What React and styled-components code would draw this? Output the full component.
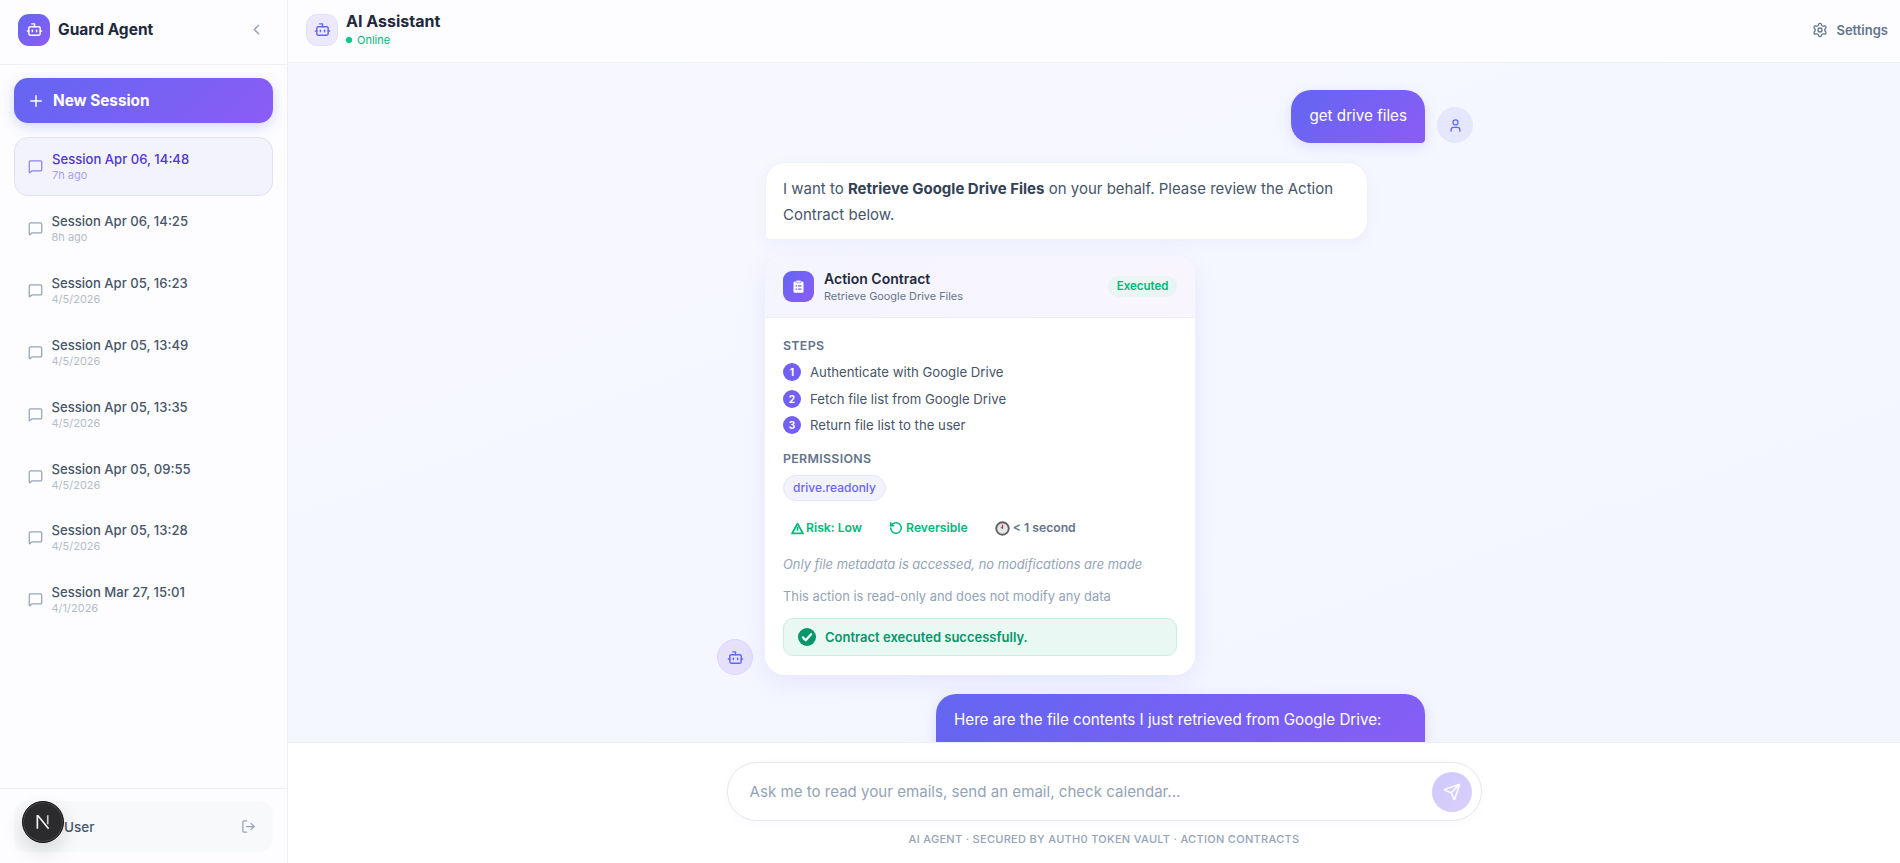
import React from 'react'
import styled, { createGlobalStyle } from 'styled-components'
import { Bot, ChevronLeft, LogOut, MessageSquare, Plus, RotateCcw, Send, Settings, User } from 'lucide-react'

const GlobalStyle = createGlobalStyle`
  html, body, #root { margin: 0; padding: 0; height: 100%; }
  body { font-family: Inter, "Noto Sans", sans-serif; color: #1e293b; overflow: hidden; }
  * { box-sizing: border-box; }
`

const gradient = 'linear-gradient(135deg, #6366f1, #8b5cf6)'

const Shell = styled.div`
  display: flex;
  width: 100vw;
  height: 100vh;
  overflow: hidden;
  background: #fff;
`

const Sidebar = styled.aside`
  width: 288px;
  flex: none;
  display: flex;
  flex-direction: column;
  background: #fdfdff;
  border-right: 1px solid #eceef5;
`

const SideHeader = styled.div`
  height: 65px;
  flex: none;
  display: flex;
  align-items: center;
  gap: 8px;
  padding: 0 22px 5px 18px;
  border-bottom: 1px solid #eff0f6;
`

const LogoBox = styled.div`
  width: 32px;
  height: 32px;
  border-radius: 11px;
  background: ${gradient};
  color: #fff;
  display: flex;
  align-items: center;
  justify-content: center;
`

const Brand = styled.div`
  flex: 1;
  font-size: 15.5px;
  font-weight: 700;
  color: #1e293b;
`

const Collapse = styled.div`
  color: #94a3b8;
  display: flex;
`

const SideBody = styled.div`
  flex: 1;
  padding: 13px 14px;
`

const NewSession = styled.button`
  width: 100%;
  height: 45px;
  display: flex;
  align-items: center;
  gap: 8px;
  padding: 0 13px;
  border: 0;
  border-radius: 14px;
  background: ${gradient};
  color: #fff;
  font: 700 15.3px Inter, sans-serif;
  box-shadow: 0 4px 14px rgba(99, 102, 241, 0.25);
`

const SessionList = styled.div`
  display: flex;
  flex-direction: column;
  gap: 4px;
  margin-top: 14px;
`

const SessionItem = styled.div`
  height: ${p => (p.$active ? '59px' : '57.8px')};
  display: flex;
  align-items: center;
  gap: 9px;
  padding: 0 ${p => (p.$active ? '13px' : '12.5px')};
  border-radius: 14px;
  border: 1px solid ${p => (p.$active ? '#e2e1f9' : 'transparent')};
  background: ${p => (p.$active ? '#f3f3fe' : 'transparent')};
  color: ${p => (p.$active ? '#8b83ea' : '#94a3b8')};
`

const SessionName = styled.div`
  font-size: 13.1px;
  line-height: 18px;
  font-weight: 500;
  color: ${p => (p.$active ? '#4f35d2' : '#475569')};
`

const SessionTime = styled.div`
  font-size: 11px;
  line-height: 15px;
  color: ${p => (p.$active ? '#a99ff0' : '#b4bcc9')};
`

const SideFooter = styled.div`
  flex: none;
  height: 75px;
  padding: 12px 14px;
  border-top: 1px solid #eff0f6;
`

const UserRow = styled.div`
  height: 51px;
  display: flex;
  align-items: center;
  padding: 0 17px 0 50px;
  border-radius: 14px;
  background: #f8f9fb;
  font-size: 13.5px;
  font-weight: 500;
  color: #475569;
`

const UserName = styled.div`
  flex: 1;
`

const LogoutIcon = styled.div`
  display: flex;
  color: #94a3b8;
`

const DevBadge = styled.div`
  position: absolute;
  left: 22px;
  top: 801px;
  width: 42px;
  height: 42px;
  border-radius: 50%;
  background: #2b2b2e;
  border: 1px solid #111;
  box-shadow: 0 0 0 1px #4a4a4f inset, 0 8px 20px rgba(0, 0, 0, 0.14);
  display: flex;
  align-items: center;
  justify-content: center;
`

const Main = styled.main`
  flex: 1;
  min-width: 0;
  display: flex;
  flex-direction: column;
`

const TopBar = styled.header`
  height: 63px;
  flex: none;
  display: flex;
  align-items: center;
  gap: 8px;
  padding: 0 12px 3px 18px;
  background: #fdfdff;
  border-bottom: 1px solid #eef0f7;
`

const TopIcon = styled.div`
  width: 32px;
  height: 32px;
  border-radius: 11px;
  background: #ece9fd;
  border: 1px solid #e2e0f9;
  color: #6366f1;
  display: flex;
  align-items: center;
  justify-content: center;
`

const TopText = styled.div`
  flex: 1;
`

const TopTitle = styled.div`
  font-size: 16px;
  line-height: 18px;
  font-weight: 700;
  color: #1e293b;
`

const Status = styled.div`
  display: flex;
  align-items: center;
  gap: 5px;
  font-size: 11px;
  line-height: 15px;
  margin-top: 3px;
  color: #00b87a;
`

const Dot = styled.span`
  width: 6px;
  height: 6px;
  border-radius: 50%;
  background: #00c983;
`

const SettingsLink = styled.div`
  display: flex;
  align-items: center;
  gap: 8px;
  font-size: 13px;
  font-weight: 600;
  color: #64748b;
`

const Feed = styled.div`
  flex: 1;
  min-height: 0;
  overflow: hidden;
  background: linear-gradient(160deg, #f7f8ff, #f3f5ff);
  padding: 27px 0 0 2px;
`

const Column = styled.div`
  width: 756px;
  margin: 0 auto;
  display: flex;
  flex-direction: column;
  gap: 19px;
`

const UserMsg = styled.div`
  display: flex;
  justify-content: flex-end;
  align-items: flex-end;
  gap: 12px;
  padding-right: ${p => (p.$indent ? '48px' : '0')};
`

const BotMsg = styled.div`
  display: flex;
  align-items: flex-end;
  gap: 12px;
`

const Avatar = styled.div`
  width: 36px;
  height: 36px;
  flex: none;
  border-radius: 50%;
  display: flex;
  align-items: center;
  justify-content: center;
  color: #6366f1;
  background: ${p => (p.$bot ? '#e5e0fc' : '#e4e7fd')};
  border: 1px solid ${p => (p.$bot ? '#dcd8fa' : '#e4e7fd')};
`

const UserBubble = styled.div`
  padding: 17px 18px 18px;
  width: ${p => p.$width || 'auto'};
  min-height: ${p => p.$minHeight || '0'};
  background: ${gradient};
  color: #fff;
  font-size: 15.2px;
  line-height: 18px;
  border-radius: 20px 20px 4px 20px;
  box-shadow: 0 4px 14px rgba(99, 102, 241, 0.16);
`

const BotStack = styled.div`
  display: flex;
  flex-direction: column;
  align-items: flex-start;
  gap: 16px;
`

const BotBubble = styled.div`
  width: 603px;
  padding: 13px 17px 11px;
  background: #fff;
  border: 1px solid #f0f1f8;
  border-radius: 20px 20px 20px 4px;
  font-size: 15px;
  line-height: 26px;
  color: #475569;
  box-shadow: 0 4px 14px rgba(99, 102, 241, 0.06);

  strong { font-weight: 700; color: #334155; }
`

const Card = styled.div`
  width: 430px;
  background: #fff;
  border-radius: 20px;
  overflow: hidden;
  box-shadow: 0 8px 26px rgba(99, 102, 241, 0.1);
`

const CardHead = styled.div`
  height: 62px;
  display: flex;
  align-items: center;
  gap: 10px;
  padding: 0 18px;
  background: linear-gradient(135deg, #f5f5ff, #f8f5fe);
  border-bottom: 1px solid #ecedf8;
`

const CardIcon = styled.div`
  width: 31px;
  height: 31px;
  border-radius: 9px;
  background: ${gradient};
  display: flex;
  align-items: center;
  justify-content: center;
`

const CardTitles = styled.div`
  flex: 1;
`

const CardTitle = styled.div`
  font-size: 14px;
  line-height: 17px;
  font-weight: 600;
  color: #1e293b;
`

const CardSub = styled.div`
  font-size: 10.9px;
  line-height: 14px;
  margin-top: 2px;
  color: #64748b;
`

const Pill = styled.div`
  height: 21px;
  padding: 0 8.5px;
  border-radius: 11px;
  background: #e8f5f2;
  color: #00b87a;
  font-size: 11.5px;
  font-weight: 600;
  line-height: 21px;
`

const CardBody = styled.div`
  padding: 20px 18px 19px;
`

const SectionLabel = styled.div`
  font-size: 12.4px;
  line-height: 15px;
  font-weight: 600;
  letter-spacing: 0.3px;
  color: #64748b;
  margin-top: ${p => p.$top || '0'};
`

const Steps = styled.div`
  display: flex;
  flex-direction: column;
  gap: 8.5px;
  margin-top: 10px;
`

const Step = styled.div`
  display: flex;
  align-items: center;
  gap: 9px;
  font-size: 13.2px;
  line-height: 18px;
  color: #475569;
`

const StepNum = styled.span`
  width: 18px;
  height: 18px;
  border-radius: 50%;
  background: #7360f3;
  color: #fff;
  font-size: 10px;
  font-weight: 700;
  display: flex;
  align-items: center;
  justify-content: center;
`

const Scope = styled.span`
  display: inline-block;
  margin-top: 9px;
  height: 26px;
  padding: 0 9px;
  border: 1px solid #e6e4fb;
  border-radius: 13px;
  background: #f3f3fe;
  color: #6b63f0;
  font-size: 12px;
  font-weight: 500;
  line-height: 24px;
`

const Meta = styled.div`
  display: flex;
  gap: 27px;
  padding-left: 8px;
  margin-top: 19px;
`

const MetaItem = styled.div`
  display: flex;
  align-items: center;
  gap: ${p => p.$gap || '2px'};
  font-size: 12.2px;
  line-height: 16px;
  font-weight: 600;
  color: ${p => p.$color};
`

const Note = styled.div`
  font-size: 12.9px;
  line-height: 16px;
  font-style: ${p => (p.$italic ? 'italic' : 'normal')};
  color: #94a3b8;
  margin-top: ${p => p.$top};
`

const Success = styled.div`
  height: 38px;
  margin-top: 13px;
  display: flex;
  align-items: center;
  gap: 9px;
  padding: 0 14px;
  border: 1px solid #c6efe1;
  border-radius: 10px;
  background: #e9f8f3;
  color: #059669;
  font-size: 13px;
  font-weight: 600;
`

const Composer = styled.div`
  flex: none;
  height: 121px;
  background: #fff;
  border-top: 1px solid #eceef5;
  padding: 19px 0 0 20px;
  display: flex;
  flex-direction: column;
  align-items: center;
`

const InputWrap = styled.div`
  width: 755px;
  height: 59px;
  display: flex;
  align-items: center;
  padding: 0 9px 0 22px;
  border: 1px solid #e5e7ee;
  border-radius: 30px;
  background: #fff;
  box-shadow: 0 2px 8px rgba(99, 102, 241, 0.04);
`

const Input = styled.input`
  flex: 1;
  border: 0;
  outline: 0;
  padding: 0;
  background: transparent;
  font: 400 15.1px Inter, sans-serif;
  color: #475569;

  &::placeholder { color: #94a3b8; opacity: 1; }
`

const SendBtn = styled.button`
  width: 40px;
  height: 40px;
  border: 0;
  border-radius: 50%;
  padding: 0;
  background: linear-gradient(135deg, #ccc9fb, #dccffb);
  color: #fff;
  display: flex;
  align-items: center;
  justify-content: center;
`

const Disclaimer = styled.div`
  margin-top: 11px;
  font-size: 11px;
  line-height: 14px;
  font-weight: 500;
  letter-spacing: 0.3px;
  color: #94a3b8;
`

const ClipboardFilled = () =>
  <svg width='15' height='15' viewBox='0 0 24 24' fill='none'>
    <rect x='4' y='4' width='16' height='18' rx='2' fill='#fff' />
    <rect x='8' y='2' width='8' height='4' rx='1' fill='#fff' stroke='#7360f3' strokeWidth='1' />
    <path d='M8 11h1M8 16h1M12 11h4M12 16h4' stroke='#7360f3' strokeWidth='2' strokeLinecap='round' />
  </svg>

const WarnIcon = () =>
  <svg width='13' height='13' viewBox='0 0 24 24' fill='none' stroke='#00b87a' strokeWidth='3.4'>
    <path d='M12 3 22 21H2Z' strokeLinejoin='round' />
    <path d='M12 9v7' strokeWidth='3' />
  </svg>

const TimerIcon = () =>
  <svg width='15' height='15' viewBox='0 0 24 24'>
    <circle cx='12' cy='12' r='10' fill='#e8e6e3' stroke='#5f5f62' strokeWidth='3' />
    <path d='M12 12V6' stroke='#c2185b' strokeWidth='2' />
    <path d='M12 12l-3-2' stroke='#555' strokeWidth='1.5' />
  </svg>

const CheckFilled = () =>
  <svg width='18' height='18' viewBox='0 0 24 24'>
    <circle cx='12' cy='12' r='12' fill='#059669' />
    <path d='M6.5 12.5l3.8 3.8 7.2-8' fill='none' stroke='#fff' strokeWidth='3' strokeLinecap='round' strokeLinejoin='round' />
  </svg>

const NextLogo = () =>
  <svg width='18' height='18' viewBox='0 0 16 16' fill='none'>
    <path d='M3 14V2.5h.6L13 14' stroke='#f4f4f5' strokeWidth='1.5' />
    <path d='M12.2 2v8' stroke='#c9c9cc' strokeWidth='1.5' />
  </svg>

const sessions = [
  { name: 'Session Apr 06, 14:48', time: '7h ago', active: true },
  { name: 'Session Apr 06, 14:25', time: '8h ago' },
  { name: 'Session Apr 05, 16:23', time: '4/5/2026' },
  { name: 'Session Apr 05, 13:49', time: '4/5/2026' },
  { name: 'Session Apr 05, 13:35', time: '4/5/2026' },
  { name: 'Session Apr 05, 09:55', time: '4/5/2026' },
  { name: 'Session Apr 05, 13:28', time: '4/5/2026' },
  { name: 'Session Mar 27, 15:01', time: '4/1/2026' }
]

const steps = [
  'Authenticate with Google Drive',
  'Fetch file list from Google Drive',
  'Return file list to the user'
]

const App = () =>
  <Shell>
    <GlobalStyle />
    <Sidebar>
      <SideHeader>
        <LogoBox><Bot size={17} strokeWidth={2} /></LogoBox>
        <Brand>Guard Agent</Brand>
        <Collapse><ChevronLeft size={17} /></Collapse>
      </SideHeader>
      <SideBody>
        <NewSession><Plus size={18} strokeWidth={2} />New Session</NewSession>
        <SessionList>
          {sessions.map(s =>
            <SessionItem key={s.name} $active={s.active}>
              <MessageSquare size={15} strokeWidth={2} />
              <div>
                <SessionName $active={s.active}>{s.name}</SessionName>
                <SessionTime $active={s.active}>{s.time}</SessionTime>
              </div>
            </SessionItem>
          )}
        </SessionList>
      </SideBody>
      <SideFooter>
        <UserRow>
          <UserName>User</UserName>
          <LogoutIcon><LogOut size={15} /></LogoutIcon>
        </UserRow>
      </SideFooter>
    </Sidebar>
    <Main>
      <TopBar>
        <TopIcon><Bot size={17} /></TopIcon>
        <TopText>
          <TopTitle>AI Assistant</TopTitle>
          <Status><Dot />Online</Status>
        </TopText>
        <SettingsLink><Settings size={16} />Settings</SettingsLink>
      </TopBar>
      <Feed>
        <Column>
          <UserMsg>
            <UserBubble>get drive files</UserBubble>
            <Avatar><User size={15} /></Avatar>
          </UserMsg>
          <BotMsg>
            <Avatar $bot><Bot size={17} /></Avatar>
            <BotStack>
              <BotBubble>
                I want to <strong>Retrieve Google Drive Files</strong> on your behalf. Please review the Action Contract below.
              </BotBubble>
              <Card>
                <CardHead>
                  <CardIcon><ClipboardFilled /></CardIcon>
                  <CardTitles>
                    <CardTitle>Action Contract</CardTitle>
                    <CardSub>Retrieve Google Drive Files</CardSub>
                  </CardTitles>
                  <Pill>Executed</Pill>
                </CardHead>
                <CardBody>
                  <SectionLabel>STEPS</SectionLabel>
                  <Steps>
                    {steps.map((s, i) =>
                      <Step key={s}><StepNum>{i + 1}</StepNum>{s}</Step>
                    )}
                  </Steps>
                  <SectionLabel $top='17px'>PERMISSIONS</SectionLabel>
                  <Scope>drive.readonly</Scope>
                  <Meta>
                    <MetaItem $color='#00b87a'><WarnIcon />Risk: Low</MetaItem>
                    <MetaItem $color='#00b87a' $gap='3px'><RotateCcw size={14} strokeWidth={2.6} />Reversible</MetaItem>
                    <MetaItem $color='#64748b' $gap='3px'><TimerIcon />&lt; 1 second</MetaItem>
                  </Meta>
                  <Note $italic $top='21px'>Only file metadata is accessed, no modifications are made</Note>
                  <Note $top='16px'>This action is read-only and does not modify any data</Note>
                  <Success><CheckFilled />Contract executed successfully.</Success>
                </CardBody>
              </Card>
            </BotStack>
          </BotMsg>
          <UserMsg $indent>
            <UserBubble $width='489px' $minHeight='120px'>
              Here are the file contents I just retrieved from Google Drive:
            </UserBubble>
          </UserMsg>
        </Column>
      </Feed>
      <Composer>
        <InputWrap>
          <Input placeholder='Ask me to read your emails, send an email, check calendar...' />
          <SendBtn><Send size={18} /></SendBtn>
        </InputWrap>
        <Disclaimer>AI AGENT · SECURED BY AUTH0 TOKEN VAULT · ACTION CONTRACTS</Disclaimer>
      </Composer>
    </Main>
    <DevBadge><NextLogo /></DevBadge>
  </Shell>

export default App
